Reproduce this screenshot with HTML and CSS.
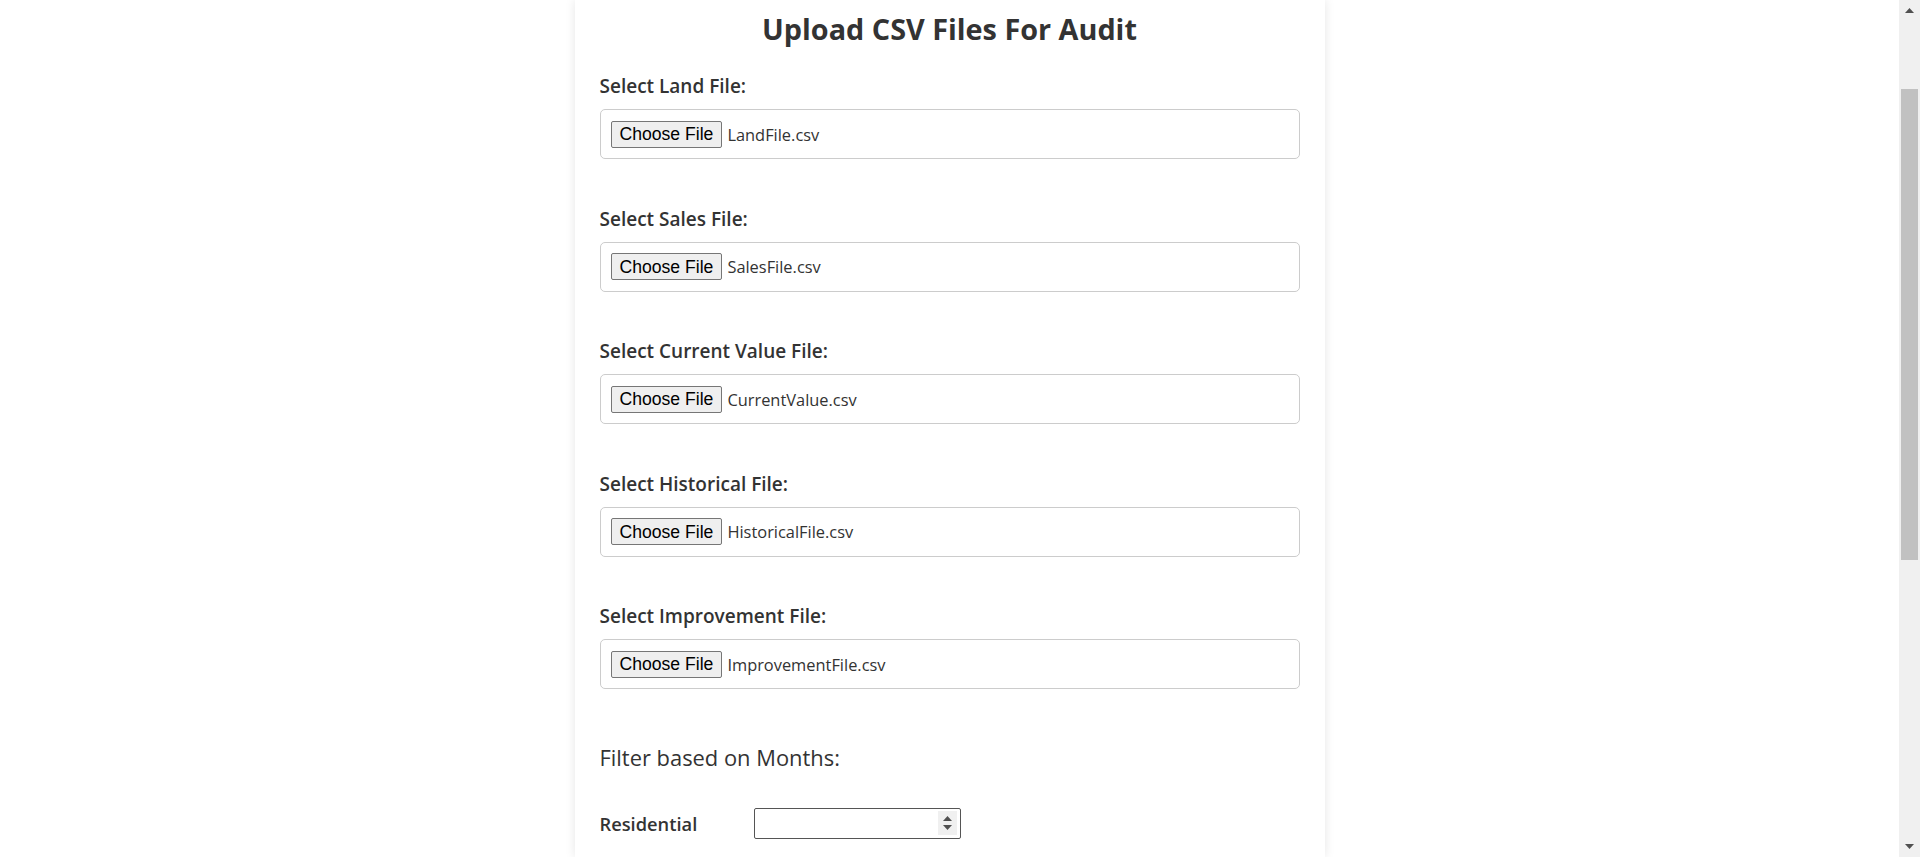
FILE: index.html
```html
<!DOCTYPE html>
<html lang="en">
<head>
<meta charset="utf-8">
<title>Upload CSV Files For Audit</title>
<link rel="stylesheet" href="styles.css">
</head>
<body>
<div class="viewport">
  <main class="page">
    <section class="card">
      <h1 class="title">Upload CSV Files For Audit</h1>

      <div class="field">
        <label class="field-label">Select Land File:</label>
        <div class="file-box"><span class="file-btn">Choose File</span><span class="file-name">LandFile.csv</span></div>
      </div>

      <div class="field">
        <label class="field-label">Select Sales File:</label>
        <div class="file-box"><span class="file-btn">Choose File</span><span class="file-name">SalesFile.csv</span></div>
      </div>

      <div class="field">
        <label class="field-label">Select Current Value File:</label>
        <div class="file-box"><span class="file-btn">Choose File</span><span class="file-name">CurrentValue.csv</span></div>
      </div>

      <div class="field">
        <label class="field-label">Select Historical File:</label>
        <div class="file-box"><span class="file-btn">Choose File</span><span class="file-name">HistoricalFile.csv</span></div>
      </div>

      <div class="field">
        <label class="field-label">Select Improvement File:</label>
        <div class="file-box"><span class="file-btn">Choose File</span><span class="file-name">ImprovementFile.csv</span></div>
      </div>

      <h2 class="filter-title">Filter based on Months:</h2>

      <div class="filter-row">
        <label class="filter-label">Residential</label>
        <div class="number-input">
          <span class="spinner">
            <svg class="spin-arrow" width="9" height="5" viewBox="0 0 9 5"><polygon points="4.5,0 9,5 0,5"/></svg>
            <svg class="spin-arrow" width="9" height="5" viewBox="0 0 9 5"><polygon points="0,0 9,0 4.5,5"/></svg>
          </span>
        </div>
      </div>
    </section>
  </main>
  <div class="scrollbar">
    <span class="sb-btn"><svg width="9" height="5" viewBox="0 0 9 5"><polygon points="4.5,0 9,5 0,5"/></svg></span>
    <span class="sb-thumb"></span>
    <span class="sb-space"></span>
    <span class="sb-btn"><svg width="9" height="5" viewBox="0 0 9 5"><polygon points="0,0 9,0 4.5,5"/></svg></span>
  </div>
</div>
</body>
</html>
```

FILE: styles.css
```css
html, body {
  margin: 0;
  padding: 0;
  height: 100%;
  overflow: hidden;
  background: #ffffff;
}

.viewport {
  display: flex;
  height: 857px;
}

.page {
  flex: 1;
  overflow: hidden;
}

.card {
  width: 750px;
  min-height: 857px;
  box-sizing: border-box;
  margin: 0 auto;
  padding: 11px 25px 0;
  background: #ffffff;
  box-shadow: 0 0 10px rgba(0, 0, 0, 0.1);
  font-family: "Open Sans", "Noto Sans", sans-serif;
  color: #333333;
}

.title {
  margin: 0 0 27px;
  font-size: 28.8px;
  line-height: 36px;
  font-weight: 700;
  text-align: center;
}

.field + .field {
  margin-top: 47.5px;
}

.field-label {
  display: block;
  margin-bottom: 11px;
  font-size: 19px;
  line-height: 24px;
  font-weight: 600;
}

.file-box {
  display: flex;
  align-items: center;
  height: 50px;
  box-sizing: border-box;
  padding: 0 10px;
  border: 1px solid #cccccc;
  border-radius: 5px;
}

.file-btn {
  display: flex;
  align-items: center;
  height: 27px;
  box-sizing: border-box;
  padding: 1px 8px 0;
  background: #efefef;
  border: 1px solid #767676;
  border-radius: 2px;
  font-family: "Liberation Sans", Arial, sans-serif;
  font-size: 17.6px;
  color: #000000;
}

.file-name {
  margin-left: 5px;
  font-size: 16.4px;
  color: #333333;
}

.filter-title {
  margin: 55px 0 0;
  font-size: 21.9px;
  line-height: 28px;
  font-weight: 400;
}

.filter-row {
  display: flex;
  align-items: center;
  margin-top: 36px;
}

.filter-label {
  width: 154px;
  font-size: 18.3px;
  line-height: 24px;
  font-weight: 600;
}

.number-input {
  display: flex;
  justify-content: flex-end;
  width: 207px;
  height: 31px;
  box-sizing: border-box;
  padding: 2px 3px 3px 0;
  border: 1px solid #555555;
  border-radius: 2px;
  background: #ffffff;
}

.spinner {
  display: flex;
  flex-direction: column;
  align-items: center;
  justify-content: center;
  gap: 4px;
  width: 19px;
  background: #f0f0f0;
}

.spin-arrow polygon,
.sb-btn polygon {
  fill: #505050;
}

.scrollbar {
  display: flex;
  flex-direction: column;
  align-items: center;
  width: 21px;
  height: 857px;
  background: #f0f0f0;
}

.sb-btn {
  display: flex;
  align-items: center;
  justify-content: center;
  width: 21px;
  height: 21px;
}

.sb-thumb {
  width: 17px;
  height: 471px;
  margin-top: 68px;
  background: #c1c1c1;
}

.sb-space {
  flex: 1;
}
```
